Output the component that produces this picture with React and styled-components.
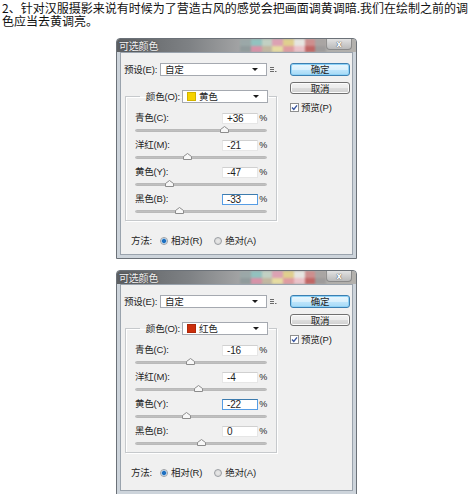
import React from 'react';
import styled, { createGlobalStyle } from 'styled-components';

const GlobalStyle = createGlobalStyle`
  body {
    margin: 0;
    background: #ffffff;
    font-family: 'Liberation Sans', 'Noto Sans CJK SC', sans-serif;
  }
`;

const Page = styled.div`
  width: 473px;
`;

const Intro = styled.p`
  margin: 0;
  padding: 1px 2px 0;
  font-family: 'Noto Sans CJK SC', sans-serif;
  font-size: 12px;
  line-height: 13px;
  color: #111111;
`;

const Dialog = styled.div`
  width: 241px;
  margin: 11px auto 0;
  box-sizing: border-box;
  border: 1px solid #6b7178;
  border-radius: 4px 4px 0 0;
  background: #cdd4db;
  font-size: 9.5px;
  letter-spacing: -0.2px;
  color: #1e1e1e;
`;

const TitleBar = styled.div`
  height: 13px;
  display: flex;
  align-items: stretch;
  background: linear-gradient(to right, #5d6063 0%, #7e8184 30%, #a3a4a5 52%, #b3b1ad 100%);
  border-radius: 3px 3px 0 0;
  overflow: hidden;
`;

const Title = styled.span`
  flex: 1;
  padding-left: 2px;
  line-height: 13px;
  font-family: 'Noto Sans CJK SC', sans-serif;
  font-size: 10px;
  color: #f2f2f2;
  text-shadow: 0 0 2px #333333;
`;

const Glass = styled.div`
  width: 86px;
  display: grid;
  grid-template-columns: repeat(8, 1fr);
  grid-template-rows: 1fr 1fr;
  filter: blur(1px);
  opacity: 0.85;
`;

const GlassCell = styled.div`
  background: ${(p) => p.$c};
`;

const CloseButton = styled.div`
  width: 24px;
  margin-right: 4px;
  height: 10px;
  border: 1px solid #8a8a8a;
  border-top: none;
  border-radius: 0 0 4px 4px;
  background: linear-gradient(#e2e2e2, #b9b9b9);
  display: flex;
  align-items: center;
  justify-content: center;
  font-family: 'DejaVu Sans', sans-serif;
  font-weight: bold;
  font-size: 8px;
  color: #ffffff;
  text-shadow: 0 0 1px #555555, 0 0 1px #555555;
`;

const Frame = styled.div`
  padding: 0 3px 3px;
`;

const Body = styled.div`
  display: flex;
  gap: 13px;
  padding: 10px 2px ${(p) => 7 + p.$extra}px 3px;
  background: #f0f0f0;
  border: 1px solid #9aa3ad;
`;

const MainColumn = styled.div`
  width: 153px;
  display: flex;
  flex-direction: column;
`;

const SideColumn = styled.div`
  width: 60px;
  display: flex;
  flex-direction: column;
`;

const PresetRow = styled.div`
  height: 13px;
  display: flex;
  align-items: center;
`;

const Label = styled.span`
  width: ${(p) => p.$w || 'auto'};
  flex: ${(p) => (p.$grow ? 1 : 'none')};
  text-align: ${(p) => p.$align || 'left'};
  white-space: nowrap;
  line-height: 12px;
`;

const Combo = styled.div`
  width: ${(p) => p.$w}px;
  height: 13px;
  box-sizing: border-box;
  border: 1px solid #a5a9b0;
  background: #ffffff;
  display: flex;
  align-items: center;
  gap: 3px;
  padding: 0 4px 0 4px;
  line-height: 11px;
`;

const ComboText = styled.span`
  flex: 1;
`;

const Arrow = styled.span`
  width: 0;
  height: 0;
  margin-right: 4px;
  border-left: 3px solid transparent;
  border-right: 3px solid transparent;
  border-top: 3px solid #1a1a1a;
`;

const Swatch = styled.span`
  width: 9px;
  height: 9px;
  box-sizing: border-box;
  background: ${(p) => p.$c};
  border: 1px solid rgba(0, 0, 0, 0.15);
`;

const MenuIcon = styled.svg`
  margin-left: 3px;
  width: 7px;
  height: 7px;
`;

const Group = styled.fieldset`
  margin: 14px 0 0 1px;
  width: 152px;
  box-sizing: border-box;
  padding: 0 9px;
  border: 1px solid #c6c9cc;
  box-shadow: inset 1px 1px 0 #ffffff, 1px 1px 0 #ffffff;
  min-inline-size: 0;
`;

const Legend = styled.legend`
  margin-left: 5px;
  padding: 0 1px;
  display: flex;
  align-items: center;
  gap: 2px;
  height: 13px;
`;

const Channels = styled.div`
  margin-top: 9px;
  display: flex;
  flex-direction: column;
`;

const Channel = styled.div`
  height: 27px;
  display: flex;
  flex-direction: column;
`;

const ValueRow = styled.div`
  height: 12px;
  display: flex;
  align-items: center;
`;

const ValueBox = styled.div`
  width: 36px;
  height: 11px;
  box-sizing: border-box;
  border: 1px solid ${(p) => (p.$focus ? '#569de5' : '#e6e6e6')};
  border-top-color: ${(p) => (p.$focus ? '#3d7bad' : '#d0d0d0')};
  background: #ffffff;
  padding-left: 4px;
  line-height: 9px;
  font-size: 10px;
`;

const Percent = styled.span`
  width: 9px;
  text-align: right;
  font-size: 9px;
`;

const Slider = styled.div`
  position: relative;
  height: 15px;
`;

const Track = styled.div`
  margin-top: 5px;
  height: 3px;
  border-radius: 2px;
  background: linear-gradient(#a7a7a7, #d8d8d8);
  border: 1px solid #b9b9b9;
  box-sizing: border-box;
`;

const Thumb = styled.svg`
  position: absolute;
  top: 2px;
  width: 9px;
  height: 7px;
`;

const MethodRow = styled.div`
  margin: 13px 0 0 7px;
  height: 13px;
  display: flex;
  align-items: center;
`;

const Radio = styled.span`
  width: 8px;
  height: 8px;
  box-sizing: border-box;
  border-radius: 50%;
  border: 1px solid #9a9ea3;
  background: ${(p) =>
    p.$on
      ? 'radial-gradient(circle, #1e6fbf 0 1.6px, #7fb6e8 2.2px, #eef4fa 3px)'
      : 'radial-gradient(circle, #e9e9e9, #d5d5d5)'};
  margin: 0 3px 0 ${(p) => p.$gap}px;
`;

const Button = styled.div`
  height: ${(p) => p.$h}px;
  margin-bottom: ${(p) => p.$mb}px;
  box-sizing: border-box;
  border-radius: 3px;
  border: 1px solid ${(p) => (p.$primary ? '#3c7fb1' : '#707070')};
  background: ${(p) =>
    p.$primary
      ? 'linear-gradient(#eaf6fd 0%, #d9f0fc 50%, #bee6fd 51%, #a7d9f5 100%)'
      : 'linear-gradient(#f2f2f2 0%, #ebebeb 50%, #dddddd 51%, #cfcfcf 100%)'};
  box-shadow: inset 0 0 0 1px ${(p) => (p.$primary ? '#8fd3f7' : '#fcfcfc')};
  display: flex;
  align-items: center;
  justify-content: center;
  line-height: 11px;
`;

const CheckRow = styled.div`
  display: flex;
  align-items: center;
  gap: 2px;
  height: 11px;
`;

const CheckBox = styled.svg`
  width: 9px;
  height: 9px;
`;

const glassColors = [
  '#9aa9a8', '#8fc7c3', '#c7d8c8', '#e6a1b6', '#ead68a', '#f0f0ec', '#d48a8a', '#a9a4a2',
  '#8e9a9b', '#e08fa8', '#c7bba0', '#f1e6a0', '#e99ba0', '#f5c7cf', '#c55a5a', '#9b9898',
];

const channels = ['青色(C):', '洋红(M):', '黄色(Y):', '黑色(B):'];

const dialogs = [
  { swatch: '#f6d300', name: '黄色', values: [36, -21, -47, -33], focus: 3, extra: 0 },
  { swatch: '#cc2f0c', name: '红色', values: [-16, -4, -22, 0], focus: 2, extra: 4 },
];

const fmt = (v) => (v > 0 ? `+${v}` : `${v}`);

const SelectiveColor = ({ swatch, name, values, focus, extra }) => (
  <Dialog>
    <TitleBar>
      <Title>可选颜色</Title>
      <Glass>
        {glassColors.map((c, i) => (
          <GlassCell key={i} $c={c} />
        ))}
      </Glass>
      <CloseButton>x</CloseButton>
    </TitleBar>
    <Frame>
      <Body $extra={extra}>
        <MainColumn>
          <PresetRow>
            <Label $w="36px">预设(E):</Label>
            <Combo $w={107}>
              <ComboText>自定</ComboText>
              <Arrow />
            </Combo>
            <MenuIcon viewBox="0 0 7 7">
              <path d="M0 1.5h4M0 3.5h4M0 5.5h4" stroke="#6a6a6a" strokeWidth="1" />
              <path d="M5 5.5h1.5" stroke="#6a6a6a" strokeWidth="1" />
            </MenuIcon>
          </PresetRow>
          <Group>
            <Legend>
              <Label $w="39px" $align="right">颜色(O):</Label>
              <Combo $w={86}>
                <Swatch $c={swatch} />
                <ComboText>{name}</ComboText>
                <Arrow />
              </Combo>
            </Legend>
            <Channels>
              {channels.map((ch, i) => (
                <Channel key={ch}>
                  <ValueRow>
                    <Label $grow>{ch}</Label>
                    <ValueBox $focus={focus === i}>{fmt(values[i])}</ValueBox>
                    <Percent>%</Percent>
                  </ValueRow>
                  <Slider>
                    <Track />
                    <Thumb
                      viewBox="0 0 9 7"
                      style={{ left: `${66 + values[i] * 0.66 - 4.5}px` }}
                    >
                      <path
                        d="M0.5 6.5V3.5L4.5 0.5L8.5 3.5V6.5Z"
                        fill="#f7f7f7"
                        stroke="#8c8c8c"
                        strokeWidth="1"
                      />
                    </Thumb>
                  </Slider>
                </Channel>
              ))}
            </Channels>
          </Group>
          <MethodRow>
            <Label>方法:</Label>
            <Radio $on $gap={8} />
            <Label>相对(R)</Label>
            <Radio $gap={12} />
            <Label>绝对(A)</Label>
          </MethodRow>
        </MainColumn>
        <SideColumn>
          <Button $primary $h={13} $mb={6}>确定</Button>
          <Button $h={12} $mb={8}>取消</Button>
          <CheckRow>
            <CheckBox viewBox="0 0 9 9">
              <rect x="0.5" y="0.5" width="8" height="8" fill="#ffffff" stroke="#8e8f8f" />
              <path d="M2 4.5L3.8 6.5L7 2.3" fill="none" stroke="#3a57a0" strokeWidth="1.4" />
            </CheckBox>
            <Label>预览(P)</Label>
          </CheckRow>
        </SideColumn>
      </Body>
    </Frame>
  </Dialog>
);

const App = () => (
  <Page>
    <GlobalStyle />
    <Intro>
      2、针对汉服摄影来说有时候为了营造古风的感觉会把画面调黄调暗.我们在绘制之前的调色应当去黄调亮。
    </Intro>
    {dialogs.map((d) => (
      <SelectiveColor key={d.name} {...d} />
    ))}
  </Page>
);

export default App;
